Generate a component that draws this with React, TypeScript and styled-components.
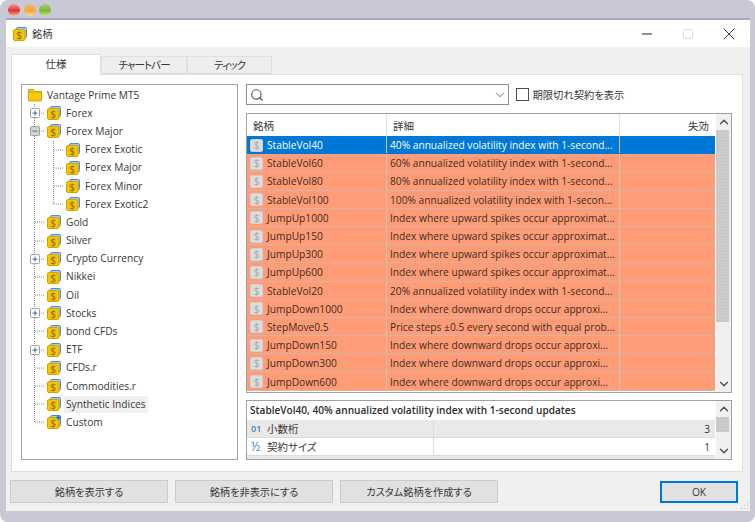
import React from "react";
import styled, { createGlobalStyle } from "styled-components";
import { Search, ChevronDown, ChevronUp, Minus, Square, X } from "lucide-react";

const FONT = `"Open Sans", "Noto Sans CJK JP", sans-serif`;

const Global = createGlobalStyle`
  html, body { margin: 0; padding: 0; background: #fff; }
  body {
    font-family: ${FONT};
    font-size: 10.2px;
    color: #383838;
    font-feature-settings: "palt";
  }
`;

const Page = styled.div`
  width: 755px;
  height: 522px;
  background: #c9c8d6;
  border-radius: 8px;
  overflow: hidden;
  display: flex;
  flex-direction: column;
`;
const Lights = styled.div`
  height: 18px;
  display: flex;
  gap: 3.5px;
  padding: 4px 0 0 8px;
  box-sizing: border-box;
`;
const Light = styled.span<{ $a: string; $b: string; $c: string }>`
  width: 12px;
  height: 12px;
  border-radius: 50%;
  background: linear-gradient(${(p) => p.$a} 0%, ${(p) => p.$b} 55%, ${(p) => p.$c} 100%);
`;
const Win = styled.div`
  margin: 0 5px 0 6px;
  height: 491px;
  border-top: 2px solid #a9a8bb;
  background: #f0f0f0;
  display: flex;
  flex-direction: column;
  position: relative;
`;
const TitleBar = styled.div`
  height: 27px;
  background: #fff;
  display: flex;
  align-items: center;
  padding-left: 4px;
  flex: none;
`;
const TitleText = styled.span`
  margin-left: 5px;
  font-size: 10.2px;
`;
const WinButtons = styled.div`
  margin-left: auto;
  display: flex;
  align-items: center;
  padding-right: 1px;
`;
const WinButton = styled.span<{ $dim?: boolean }>`
  width: 41px;
  height: 27px;
  display: flex;
  align-items: center;
  justify-content: center;
  color: ${(p) => (p.$dim ? "#d9d9d9" : "#222")};
`;
const TabStrip = styled.div`
  display: flex;
  align-items: flex-end;
  height: 20px;
  margin: 7px 0 0 5px;
  flex: none;
  position: relative;
  z-index: 1;
`;
const Tab = styled.div<{ $active?: boolean; $w: number; $kana?: boolean }>`
  width: ${(p) => p.$w}px;
  height: ${(p) => (p.$active ? 21 : 18)}px;
  margin-bottom: ${(p) => (p.$active ? -1 : 0)}px;
  box-sizing: border-box;
  background: ${(p) => (p.$active ? "#fff" : "#eeeeee")};
  border: 1px solid #e0e0e0;
  border-bottom: ${(p) => (p.$active ? "none" : "1px solid #e0e0e0")};
  display: flex;
  align-items: center;
  justify-content: center;
  padding-bottom: ${(p) => (p.$active ? 3 : 1)}px;
  font-size: 10.5px;
  letter-spacing: ${(p) => (p.$kana ? "-0.9px" : "0")};
`;
const Panel = styled.div`
  margin: 0 7px 0 5px;
  height: 398px;
  box-sizing: border-box;
  background: #fff;
  border: 1px solid #dedede;
  padding: 9px 9px 0 9px;
  display: flex;
  gap: 8px;
  flex: none;
`;
const TreeBox = styled.div`
  width: 217px;
  height: 376px;
  box-sizing: border-box;
  border: 1px solid #a0a0a0;
  padding-top: 1px;
  flex: none;
`;
const TreeRow = styled.div`
  height: 18.2px;
  padding-left: 3px;
  display: flex;
  align-items: center;
`;
const GuideSvg = styled.svg`
  width: 19px;
  height: 100%;
  flex: none;
  display: block;
`;
const TreeIcon = styled.svg`
  width: 14px;
  height: 14px;
  margin-left: 3px;
  flex: none;
`;
const TreeLabel = styled.span<{ $sel?: boolean }>`
  margin-left: ${(p) => (p.$sel ? 3 : 5)}px;
  padding: ${(p) => (p.$sel ? "1px 2px" : "0")};
  background: ${(p) => (p.$sel ? "#f0f0f0" : "transparent")};
  white-space: nowrap;
  line-height: 15px;
`;
const Right = styled.div`
  width: 486px;
  display: flex;
  flex-direction: column;
  flex: none;
`;
const SearchRow = styled.div`
  display: flex;
  align-items: center;
  height: 21px;
  flex: none;
`;
const Combo = styled.div`
  width: 263px;
  height: 21px;
  box-sizing: border-box;
  border: 1px solid #8e8e8e;
  display: flex;
  align-items: center;
  justify-content: space-between;
  padding: 0 1px 0 3px;
  color: #555;
`;
const CheckBox = styled.span`
  width: 13px;
  height: 13px;
  box-sizing: border-box;
  border: 1px solid #4f4f4f;
  margin-left: 7px;
  background: #fff;
`;
const CheckLabel = styled.span`
  margin-left: 3.5px;
  font-size: 10.3px;
`;
const Listing = styled.div`
  margin-top: 8px;
  height: 280px;
  box-sizing: border-box;
  border: 1px solid #a0a0a0;
  display: flex;
  flex: none;
`;
const ListMain = styled.div`
  width: 468px;
  flex: none;
`;
const Cols = styled.div`
  display: grid;
  grid-template-columns: 140px 233px 95px;
`;
const HeadRow = styled(Cols)`
  height: 22px;
`;
const HeadCell = styled.div<{ $right?: boolean }>`
  border-right: 1px solid #e3e3e3;
  display: flex;
  align-items: center;
  justify-content: ${(p) => (p.$right ? "flex-end" : "flex-start")};
  padding: ${(p) => (p.$right ? "0 6px 0 0" : "0 0 0 6px")};
  font-size: 10.5px;
  &:last-child { border-right: none; }
`;
const DataRow = styled(Cols)<{ $sel?: boolean }>`
  height: 18.2px;
  box-sizing: border-box;
  background: ${(p) => (p.$sel ? "#0078d7" : "#ff9c78")};
  color: ${(p) => (p.$sel ? "#fff" : "#402c22")};
  border-bottom: 1px solid ${(p) => (p.$sel ? "#0078d7" : "#d8b4a4")};
`;
const DataCell = styled.div`
  border-right: 1px solid #d6c0b6;
  display: flex;
  align-items: center;
  padding: 1px 0 0 3px;
  white-space: nowrap;
  overflow: hidden;
  &:last-child { border-right: none; }
`;
const NameText = styled.span`
  margin-left: 4px;
`;
const GreyIcon = styled.span`
  width: 13px;
  height: 13px;
  border-radius: 2px;
  background: #dcdcdc;
  border: 1px solid #d0d0d0;
  box-sizing: border-box;
  color: #a4a4a4;
  display: flex;
  align-items: center;
  justify-content: center;
  font-size: 10px;
  flex: none;
`;
const Scroll = styled.div`
  width: 15px;
  margin-left: 1px;
  background: #f0f0f0;
  display: flex;
  flex-direction: column;
  flex: none;
`;
const Arrow = styled.div<{ $h: number }>`
  height: ${(p) => p.$h}px;
  display: flex;
  align-items: center;
  justify-content: center;
  color: #555;
  flex: none;
`;
const Thumb = styled.div<{ $h: number }>`
  height: ${(p) => p.$h}px;
  margin-right: 2px;
  background-color: #cbcbcb;
  background-image: radial-gradient(#bfbfbf 0.5px, transparent 0.6px);
  background-size: 3px 3px;
  flex: none;
`;
const Spacer = styled.div`
  flex: 1;
`;
const Details = styled.div`
  margin-top: 7px;
  height: 60px;
  box-sizing: border-box;
  border: 1px solid #a0a0a0;
  display: flex;
  flex: none;
  overflow: hidden;
`;
const DetailMain = styled.div`
  width: 468px;
  flex: none;
`;
const DetailHead = styled.div`
  height: 19px;
  display: flex;
  align-items: center;
  padding: 0 0 2px 3px;
  box-sizing: border-box;
  font-weight: 600;
  font-size: 10.1px;
  color: #2c2c2c;
`;
const SpecRow = styled.div<{ $alt?: boolean }>`
  display: grid;
  grid-template-columns: 187px 1fr;
  height: 18px;
  box-sizing: border-box;
  background: ${(p) => (p.$alt ? "#e9e9e9" : "#fff")};
  border-bottom: 1px solid #dcdcdc;
`;
const SpecName = styled.div`
  border-right: 1px solid #dcdcdc;
  display: flex;
  align-items: center;
  padding: 0 0 1px 4px;
  font-size: 10.5px;
`;
const SpecIcon = styled.span<{ $big?: boolean }>`
  width: 12px;
  color: #3a82c4;
  font-size: ${(p) => (p.$big ? 12 : 9)}px;
  font-weight: ${(p) => (p.$big ? 400 : 600)};
  margin-right: 4px;
  flex: none;
`;
const SpecValue = styled.div`
  display: flex;
  align-items: center;
  justify-content: flex-end;
  padding-right: 5px;
`;
const Footer = styled.div`
  display: flex;
  gap: 7px;
  padding: 8px 12px 0 4px;
  align-items: flex-start;
`;
const Btn = styled.div<{ $w: number; $primary?: boolean }>`
  width: ${(p) => p.$w}px;
  height: ${(p) => (p.$primary ? 22 : 23)}px;
  box-sizing: border-box;
  background: #e1e1e1;
  border: ${(p) => (p.$primary ? "2px solid #0078d7" : "1px solid #cbcbcb")};
  display: flex;
  align-items: center;
  justify-content: center;
  font-size: 10.2px;
  ${(p) => (p.$primary ? "margin: 1px 0 0 auto;" : "")}
`;
const Grip = styled.svg`
  position: absolute;
  right: 1px;
  bottom: 1px;
  width: 9px;
  height: 9px;
`;

const Coin = ({ plus }: { plus?: boolean }) => (
  <TreeIcon viewBox="0 0 14 14">
    <rect x="3.5" y="0.5" width="10" height="10.5" rx="1.5" fill="#a9cbea" stroke="#4a8fcc" />
    <rect x="0.5" y="2.5" width="11.5" height="11" rx="1.5" fill="#f6c400" stroke="#d3a200" />
    <text x="6.2" y="11.7" textAnchor="middle" fontSize="10" fontWeight="600" fill="#9a7a10" fontFamily="Open Sans">$</text>
    {plus && <path d="M11.5 0v5M9 2.5h5" stroke="#1f74c4" strokeWidth="1.6" />}
  </TreeIcon>
);
const FolderIcon = () => (
  <TreeIcon viewBox="0 0 14 14">
    <path d="M0.5 1.5h5l1.5 2h6.5v9.5H0.5z" fill="#f6c90e" stroke="#d9a800" />
    <path d="M1 4h12" stroke="#d9a800" />
  </TreeIcon>
);

type Kind = "blank" | "pipe" | "tee" | "end" | "plus" | "minus";
const Guide = ({ kind }: { kind: Kind }) => {
  const c = "#8c8c8c";
  const d = "1 1";
  return (
    <GuideSvg>
      {kind !== "blank" && (
        <line x1="9.5" y1="0" x2="9.5" y2={kind === "end" ? "50%" : "100%"} stroke={c} strokeDasharray={d} />
      )}
      {kind !== "blank" && kind !== "pipe" && (
        <line x1="10" y1="50%" x2="19" y2="50%" stroke={c} strokeDasharray={d} />
      )}
      {(kind === "plus" || kind === "minus") && (
        <svg y="50%" overflow="visible">
          <rect x="5.5" y="-4.5" width="9" height="9" rx="1" fill={kind === "minus" ? "#d4d4d4" : "#fff"} stroke="#9c9c9c" />
          <path d="M7.5 0h5" stroke={kind === "minus" ? "#666" : "#34659c"} />
          {kind === "plus" && <path d="M10 -2.5v5" stroke="#34659c" />}
        </svg>
      )}
    </GuideSvg>
  );
};

const tree: { g: Kind[]; t: string; sel?: boolean; plus?: boolean }[] = [
  { g: ["plus"], t: "Forex" },
  { g: ["minus"], t: "Forex Major" },
  { g: ["pipe", "tee"], t: "Forex Exotic" },
  { g: ["pipe", "tee"], t: "Forex Major" },
  { g: ["pipe", "tee"], t: "Forex Minor" },
  { g: ["pipe", "end"], t: "Forex Exotic2" },
  { g: ["tee"], t: "Gold" },
  { g: ["tee"], t: "Silver" },
  { g: ["plus"], t: "Crypto Currency" },
  { g: ["tee"], t: "Nikkei" },
  { g: ["tee"], t: "Oil" },
  { g: ["plus"], t: "Stocks" },
  { g: ["tee"], t: "bond CFDs" },
  { g: ["plus"], t: "ETF" },
  { g: ["tee"], t: "CFDs.r" },
  { g: ["tee"], t: "Commodities.r" },
  { g: ["tee"], t: "Synthetic Indices", sel: true },
  { g: ["end"], t: "Custom", plus: true },
];

const vol = (p: string, tail = "1-second...") => `${p}% annualized volatility index with ${tail}`;
const up = "Index where upward spikes occur approximat...";
const down = "Index where downward drops occur approxi...";
const rows: [string, string][] = [
  ["StableVol40", vol("40")],
  ["StableVol60", vol("60")],
  ["StableVol80", vol("80")],
  ["StableVol100", vol("100", "1-secon...")],
  ["JumpUp1000", up],
  ["JumpUp150", up],
  ["JumpUp300", up],
  ["JumpUp600", up],
  ["StableVol20", vol("20")],
  ["JumpDown1000", down],
  ["StepMove0.5", "Price steps ±0.5 every second with equal prob..."],
  ["JumpDown150", down],
  ["JumpDown300", down],
  ["JumpDown600", down],
];

export default function App() {
  return (
    <Page>
      <Global />
      <Lights>
        <Light $a="#f09a94" $b="#e0342c" $c="#f4b8a8" />
        <Light $a="#f0b878" $b="#f2a93c" $c="#f8d8a0" />
        <Light $a="#a8c880" $b="#7cb82c" $c="#c8e0a0" />
      </Lights>
      <Win>
        <TitleBar>
          <Coin />
          <TitleText>銘柄</TitleText>
          <WinButtons>
            <WinButton><Minus size={16} strokeWidth={1.5} /></WinButton>
            <WinButton $dim><Square size={12} strokeWidth={2} /></WinButton>
            <WinButton><X size={20} strokeWidth={1.1} /></WinButton>
          </WinButtons>
        </TitleBar>
        <TabStrip>
          <Tab $active $w={90}>仕様</Tab>
          <Tab $kana $w={86}>チャートバー</Tab>
          <Tab $kana $w={85}>ティック</Tab>
        </TabStrip>
        <Panel>
          <TreeBox>
            <TreeRow>
              <FolderIcon />
              <TreeLabel>Vantage Prime MT5</TreeLabel>
            </TreeRow>
            {tree.map((n, i) => (
              <TreeRow key={i}>
                {n.g.map((k, j) => <Guide key={j} kind={k} />)}
                <Coin plus={n.plus} />
                <TreeLabel $sel={n.sel}>{n.t}</TreeLabel>
              </TreeRow>
            ))}
          </TreeBox>
          <Right>
            <SearchRow>
              <Combo>
                <Search size={14} strokeWidth={2} />
                <ChevronDown size={14} strokeWidth={1.4} />
              </Combo>
              <CheckBox />
              <CheckLabel>期限切れ契約を表示</CheckLabel>
            </SearchRow>
            <Listing>
              <ListMain>
                <HeadRow>
                  <HeadCell>銘柄</HeadCell>
                  <HeadCell>詳細</HeadCell>
                  <HeadCell $right>失効</HeadCell>
                </HeadRow>
                {rows.map(([n, d], i) => (
                  <DataRow key={n} $sel={i === 0}>
                    <DataCell>
                      <GreyIcon>$</GreyIcon>
                      <NameText>{n}</NameText>
                    </DataCell>
                    <DataCell>{d}</DataCell>
                    <DataCell />
                  </DataRow>
                ))}
              </ListMain>
              <Scroll>
                <Arrow $h={16}><ChevronUp size={14} strokeWidth={2.6} /></Arrow>
                <Thumb $h={192} />
                <Spacer />
                <Arrow $h={16}><ChevronDown size={14} strokeWidth={2.6} /></Arrow>
              </Scroll>
            </Listing>
            <Details>
              <DetailMain>
                <DetailHead>StableVol40, 40% annualized volatility index with 1-second updates</DetailHead>
                <SpecRow $alt>
                  <SpecName><SpecIcon>01</SpecIcon>小数桁</SpecName>
                  <SpecValue>3</SpecValue>
                </SpecRow>
                <SpecRow>
                  <SpecName><SpecIcon $big>½</SpecIcon>契約サイズ</SpecName>
                  <SpecValue>1</SpecValue>
                </SpecRow>
                <SpecRow $alt />
              </DetailMain>
              <Scroll>
                <Arrow $h={16}><ChevronUp size={14} strokeWidth={2.6} /></Arrow>
                <Thumb $h={15} />
                <Spacer />
                <Arrow $h={16}><ChevronDown size={14} strokeWidth={2.6} /></Arrow>
              </Scroll>
            </Details>
          </Right>
        </Panel>
        <Footer>
          <Btn $w={158}>銘柄を表示する</Btn>
          <Btn $w={158}>銘柄を非表示にする</Btn>
          <Btn $w={158}>カスタム銘柄を作成する</Btn>
          <Btn $primary $w={78}>OK</Btn>
        </Footer>
        <Grip viewBox="0 0 9 9">
          <path d="M7 1h1v1H7zM4 4h1v1H4zM7 4h1v1H7zM1 7h1v1H1zM4 7h1v1H4zM7 7h1v1H7z" fill="#b8b8b8" />
        </Grip>
      </Win>
    </Page>
  );
}
